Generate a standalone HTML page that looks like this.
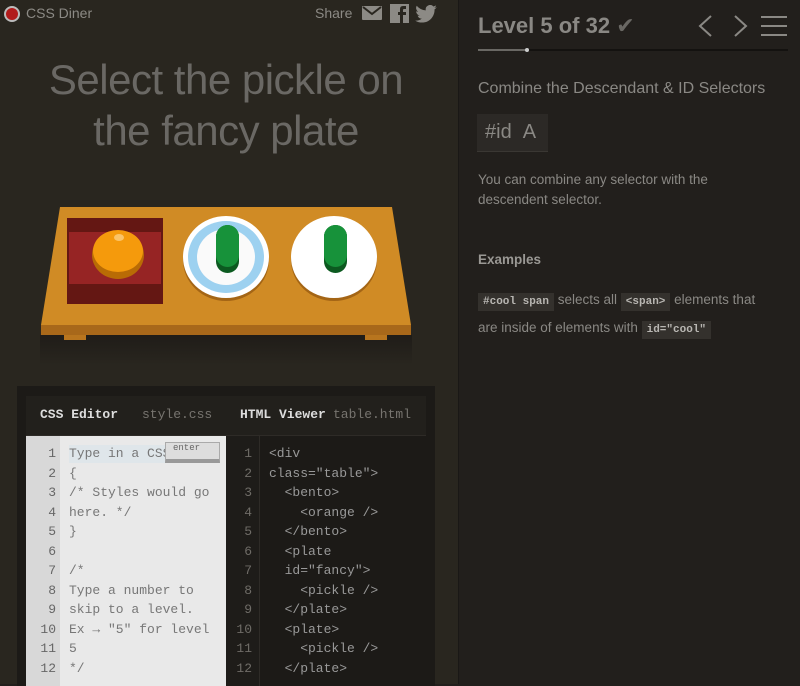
<!DOCTYPE html>
<html><head><style>
*{margin:0;padding:0;box-sizing:border-box}
body{width:800px;height:684px;overflow:hidden;background:#221f1c;font-family:"Liberation Sans",sans-serif;position:relative}
.left{position:absolute;left:0;top:0;width:458px;height:684px;background:#29261f}
.right{position:absolute;left:458px;top:0;width:342px;height:684px;background:#221f1c;border-left:1px solid #1a1816}
.mono{font-family:"Liberation Mono",monospace}
.abs{position:absolute}
.code{position:absolute;font-size:13px;line-height:19.5px;white-space:pre}
</style></head><body>
<div class="left">
  <div class="abs" style="left:4px;top:6px;width:16px;height:16px;border-radius:50%;background:#bbb"></div>
  <div class="abs" style="left:6px;top:8px;width:12px;height:12px;border-radius:50%;background:#b11b1b"></div>
  <div class="abs" style="left:26px;top:5px;font-size:14px;color:#8c8a85">CSS Diner</div>
  <div class="abs" style="left:315px;top:5px;font-size:14px;color:#8c8a85">Share</div>
  <svg class="abs" style="left:362px;top:6px" width="20" height="14"><rect x="0" y="0" width="20" height="14" rx="1" fill="#8c8a85"/><path d="M1 1 L10 8 L19 1" stroke="#29261f" stroke-width="2" fill="none"/></svg>
  <svg class="abs" style="left:390px;top:4px" width="19" height="19"><rect width="19" height="19" fill="#8c8a85"/><path d="M13 19 V11 H16 V8 H13 V6 Q13 5 14 5 H16 V2 H13 Q10 2 10 5 V8 H8 V11 H10 V19Z" fill="#29261f"/></svg>
  <svg class="abs" style="left:415px;top:5px" width="22" height="18" viewBox="0 0 24 20"><path d="M24 2.4a10 10 0 0 1-2.8.8A5 5 0 0 0 23.3.4a10 10 0 0 1-3.1 1.2A4.9 4.9 0 0 0 11.8 6 14 14 0 0 1 1.7.9a4.9 4.9 0 0 0 1.5 6.6A4.9 4.9 0 0 1 1 6.9a4.9 4.9 0 0 0 3.9 4.8 4.9 4.9 0 0 1-2.2.1 4.9 4.9 0 0 0 4.6 3.4A9.9 9.9 0 0 1 0 17.3 14 14 0 0 0 7.5 19.5c9.1 0 14-7.5 14-14v-.6A10 10 0 0 0 24 2.4z" fill="#8c8a85"/></svg>
  <div class="abs" style="left:0;top:54px;width:452px;text-align:center;font-size:42px;line-height:51px;color:#6a6864;letter-spacing:-0.5px">Select the pickle on<br>the fancy plate</div>
  <!-- table -->
  <div class="abs" style="left:40px;top:335px;width:372px;height:30px;background:linear-gradient(#1f1c18,#29261f)"></div>
  <div class="abs" style="left:64px;top:333px;width:22px;height:7px;background:#b8751e"></div>
  <div class="abs" style="left:365px;top:333px;width:22px;height:7px;background:#b8751e"></div>
  <svg class="abs" style="left:40px;top:206px" width="372" height="130"><polygon points="20,1 352,1 371,119 1,119" fill="#d08b25"/><rect x="1" y="119" width="370" height="10" fill="#a8681a"/></svg>
  <div class="abs" style="left:67px;top:218px;width:96px;height:86px;background:#641713"></div>
  <div class="abs" style="left:69px;top:232px;width:92px;height:52px;background:#962424"></div>
  <div class="abs" style="left:92px;top:231px;width:52px;height:48px;border-radius:50%;background:#b96b05"></div>
  <div class="abs" style="left:93px;top:230px;width:50px;height:42px;border-radius:50%;background:#f59a0c"></div>
  <div class="abs" style="left:114px;top:234px;width:10px;height:7px;border-radius:50%;background:#fbc468"></div>
  <div class="abs" style="left:183px;top:219px;width:86px;height:82px;border-radius:50%;background:#a46515"></div>
  <div class="abs" style="left:183px;top:216px;width:86px;height:82px;border-radius:50%;background:#fff"></div>
  <div class="abs" style="left:188px;top:221px;width:76px;height:72px;border-radius:50%;background:#9dd1f0"></div>
  <div class="abs" style="left:197px;top:229px;width:58px;height:56px;border-radius:50%;background:#fafafa"></div>
  <div class="abs" style="left:291px;top:219px;width:86px;height:82px;border-radius:50%;background:#a46515"></div>
  <div class="abs" style="left:291px;top:216px;width:86px;height:82px;border-radius:50%;background:#fff"></div>
  <div class="abs" style="left:216px;top:225px;width:23px;height:48px;border-radius:12px;background:#0c5a20"></div>
  <div class="abs" style="left:216px;top:225px;width:23px;height:42px;border-radius:12px;background:#17923a"></div>
  <div class="abs" style="left:324px;top:225px;width:23px;height:48px;border-radius:12px;background:#0c5a20"></div>
  <div class="abs" style="left:324px;top:225px;width:23px;height:42px;border-radius:12px;background:#17923a"></div>
  <!-- editor -->
  <div class="abs" style="left:17px;top:386px;width:418px;height:300px;background:#1c1a17"></div>
  <div class="abs" style="left:26px;top:396px;width:400px;height:40px;background:#22201c;border-bottom:1px solid #2e2b27"></div>
  <div class="abs mono" style="left:40px;top:407px;font-size:13px;color:#ddd;font-weight:bold">CSS Editor</div>
  <div class="abs mono" style="left:142px;top:407px;font-size:13px;color:#77746f">style.css</div>
  <div class="abs mono" style="left:240px;top:407px;font-size:13px;color:#ddd;font-weight:bold">HTML Viewer</div>
  <div class="abs mono" style="left:333px;top:407px;font-size:13px;color:#77746f">table.html</div>
  <div class="abs" style="left:26px;top:436px;width:200px;height:250px;background:#e9e9e9"></div>
  <div class="abs" style="left:26px;top:436px;width:34px;height:250px;background:#d8d8d8"></div>
  <div class="abs" style="left:69px;top:445px;width:96px;height:18px;background:#dfe6ea"></div>
  <div class="code mono" style="left:26px;top:444px;width:30px;text-align:right;color:#666">1
2
3
4
5
6
7
8
9
10
11
12</div>
  <div class="code mono" style="left:69px;top:444px;color:#777">Type in a CSS
{
/* Styles would go
here. */
}

/*
Type a number to
skip to a level.
Ex → "5" for level
5
*/</div>
  <div class="abs mono" style="left:165px;top:442px;width:55px;height:21px;background:#ddd;border:1px solid #aaa;border-bottom:4px solid #999;font-size:9px;color:#666;padding-left:7px">enter</div>
  <div class="abs" style="left:226px;top:436px;width:34px;height:250px;background:#1e1c19;border-right:1px solid #2e2b27"></div>
  <div class="code mono" style="left:226px;top:444px;width:26px;text-align:right;color:#6f6c67">1
2
3
4
5
6
7
8
9
10
11
12</div>
  <div class="code mono" style="left:269px;top:444px;color:#999">&lt;div
class="table"&gt;
  &lt;bento&gt;
    &lt;orange /&gt;
  &lt;/bento&gt;
  &lt;plate
  id="fancy"&gt;
    &lt;pickle /&gt;
  &lt;/plate&gt;
  &lt;plate&gt;
    &lt;pickle /&gt;
  &lt;/plate&gt;</div>
</div>
<div class="right">
  <div class="abs" style="left:19px;top:13px;font-size:22px;font-weight:bold;color:#8a8884">Level 5 of 32 <span style="font-weight:normal;color:#6a6864">✔</span></div>
  <svg class="abs" style="left:238px;top:14px" width="90" height="24"><path d="M14 2 L3 12 L14 22" stroke="#8a8884" stroke-width="2" fill="none"/><path d="M38 2 L49 12 L38 22" stroke="#8a8884" stroke-width="2" fill="none"/><path d="M64 3 H90 M64 12 H90 M64 21 H90" stroke="#8a8884" stroke-width="2"/></svg>
  <div class="abs" style="left:19px;top:49px;width:310px;height:2px;background:#141210"></div>
  <div class="abs" style="left:19px;top:49px;width:48px;height:2px;background:#6a6864"></div>
  <div class="abs" style="left:66px;top:48px;width:4px;height:4px;border-radius:50%;background:#ccc"></div>
  <div class="abs" style="left:19px;top:80px;font-size:16px;color:#8a8884">Combine the Descendant &amp; ID Selectors</div>
  <div class="abs" style="left:18px;top:114px;width:71px;height:38px;background:#2c2926;border-bottom:1px solid #3a3733;font-size:20px;color:#8a8884;padding:7px 0 0 8px">#id&nbsp;&nbsp;A</div>
  <div class="abs" style="left:19px;top:170px;font-size:13.5px;line-height:20px;color:#8a8884;width:270px">You can combine any selector with the descendent selector.</div>
  <div class="abs" style="left:19px;top:252px;font-size:13.5px;font-weight:bold;color:#9a9894">Examples</div>
  <div class="abs" style="left:19px;top:287px;font-size:13.5px;line-height:25px;color:#8a8884;width:296px"><span class="mono" style="background:#34312d;color:#b8b6b2;font-size:11px;font-weight:bold;padding:3px 5px">#cool span</span> selects all <span class="mono" style="background:#34312d;color:#b8b6b2;font-size:11px;font-weight:bold;padding:3px 5px">&lt;span&gt;</span> elements that are inside of elements with <span class="mono" style="background:#34312d;color:#b8b6b2;font-size:11px;font-weight:bold;padding:3px 5px">id="cool"</span></div>
</div>
</body></html>
